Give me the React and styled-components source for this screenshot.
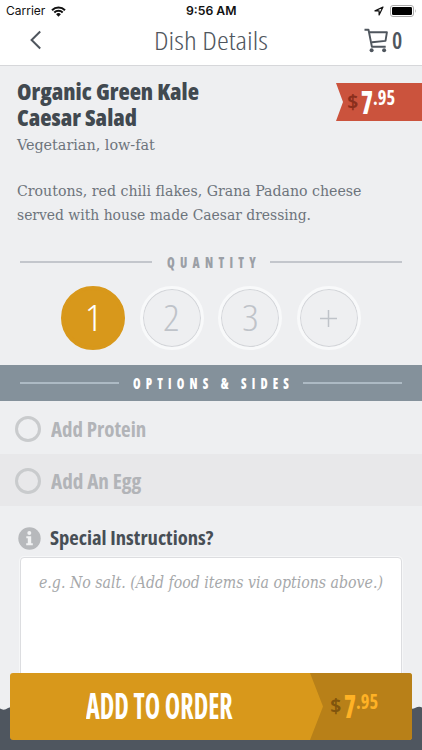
import React, { useLayoutEffect, useRef, useState } from 'react'
import styled, { createGlobalStyle } from 'styled-components';

// Squeezes a line of text horizontally so that it fills the given width.
const Fit = ({ width, spacing = 0, children }) => {
  const ref = useRef(null);
  const [scale, setScale] = useState(1);

  useLayoutEffect(() => {
    const natural = ref.current.offsetWidth - spacing;
    setScale(width / natural);
  }, [width, spacing, children]);

  return (
    <FitBox $width={width}>
      <FitText ref={ref} $spacing={spacing} style={{ transform: `scaleX(${scale})` }}>
        {children}
      </FitText>
    </FitBox>
  )
}

const quantities = [
  { label: '1', width: 17, active: true },
  { label: '2', width: 17 },
  { label: '3', width: 17 },
];

const options = [
  { label: 'Add Protein', width: 95 },
  { label: 'Add An Egg', width: 90 },
];

const StatusBar = () => (
  <Status>
    <Carrier>
      <Fit width={39}>Carrier</Fit>
      <svg width="15" height="11" viewBox="0 0 15 11">
        <path d="M1 4.2a9.2 9.2 0 0 1 13 0M3.3 6.5a6 6 0 0 1 8.4 0" fill="none" stroke="#111" strokeWidth="2" />
        <path d="M5.1 8.2a3.4 3.4 0 0 1 4.8 0L7.5 10.7z" fill="#111" />
      </svg>
    </Carrier>
    <Time><Fit width={51}>9:56 AM</Fit></Time>
    <Indicators>
      <svg width="10" height="10" viewBox="0 0 10 10">
        <path d="M9 1L1 4.9h4.1V9z" fill="none" stroke="#111" strokeWidth="1.2" strokeLinejoin="round" />
      </svg>
      <svg width="27" height="12" viewBox="0 0 27 12">
        <rect x=".5" y=".5" width="23" height="11" rx="2.5" fill="none" stroke="#aaa" />
        <rect x="2" y="2" width="20" height="8" rx="1.2" fill="#000" />
        <path d="M25 4q1.6 2 0 4z" fill="#aaa" />
      </svg>
    </Indicators>
  </Status>
)

const App = () => {
  return (
    <Screen>
      <GlobalStyle />
      <StatusBar />
      <Header>
        <Back>
          <svg width="12" height="20" viewBox="0 0 12 20">
            <path d="M10.2 1.5L1.6 10l8.6 8.5" fill="none" stroke="#4f565e" strokeWidth="2" />
          </svg>
        </Back>
        <Title><Fit width={114}>Dish Details</Fit></Title>
        <Cart>
          <svg width="25" height="25" viewBox="0 0 25 25">
            <path d="M.5 1.7h4l3.4 17.1h13.8M5.1 4.3h17.8l-1.4 8.6L8 14.3" fill="none" stroke="#4f565e" strokeWidth="1.9" strokeLinejoin="round" />
            <circle cx="7.6" cy="22.3" r="2" fill="#4f565e" />
            <circle cx="20.1" cy="22.3" r="2" fill="#4f565e" />
          </svg>
          <Fit width={10}>0</Fit>
        </Cart>
      </Header>

      <Dish>
        <div>
          <DishName>
            <Fit width={182}>Organic Green Kale</Fit>
            <Fit width={120}>Caesar Salad</Fit>
          </DishName>
          <Diet><Fit width={138}>Vegetarian, low-fat</Fit></Diet>
          <Description>
            <Fit width={344}>Croutons, red chili flakes, Grana Padano cheese</Fit>
            <Fit width={294}>served with house made Caesar dressing.</Fit>
          </Description>
        </div>
        <Ribbon>
          <Dollar><Fit width={11}>$</Fit></Dollar>
          <Whole><Fit width={12}>7</Fit></Whole>
          <Cents><Fit width={22}>.95</Fit></Cents>
        </Ribbon>
      </Dish>

      <Divider>
        <Rule />
        <Fit width={89} spacing={7}>QUANTITY</Fit>
        <Rule />
      </Divider>

      <Quantities>
        {quantities.map((q) => (
          <Quantity key={q.label} $active={q.active}>
            <Fit width={q.width}>{q.label}</Fit>
          </Quantity>
        ))}
        <Quantity>
          <svg width="17" height="17" viewBox="0 0 17 17">
            <path d="M8.5 0v17M0 8.5h17" stroke="#bfc3c9" strokeWidth="1.5" />
          </svg>
        </Quantity>
      </Quantities>

      <Divider $band>
        <Rule $band />
        <Fit width={156} spacing={7}>OPTIONS &amp; SIDES</Fit>
        <Rule $band />
      </Divider>

      {options.map((o, i) => (
        <Option key={o.label} $shaded={i % 2 === 1}>
          <Radio />
          <Fit width={o.width}>{o.label}</Fit>
        </Option>
      ))}

      <Instructions>
        <InstructionsTitle>
          <svg width="23" height="23" viewBox="0 0 23 23">
            <circle cx="11.5" cy="11.5" r="11.2" fill="#b7b9bc" />
            <circle cx="11.3" cy="5.9" r="2" fill="#f1f2f3" />
            <path d="M8.3 9.3h4.9v6.9h1.6v2H8.2v-2h1.6v-4.9H8.3z" fill="#f1f2f3" />
          </svg>
          <Fit width={163}>Special Instructions?</Fit>
        </InstructionsTitle>
        <Notes>
          <Fit width={344}>e.g. No salt. (Add food items via options above.)</Fit>
        </Notes>
      </Instructions>

      <Footer>
        <Wave width="422" height="44" viewBox="0 0 422 44">
          <path d="M0 2.5Q4 5 8 2L14 0H408Q411 4 415 2Q419 0 422 1.5V44H0z" fill="#4f565f" />
        </Wave>
        <OrderButton>
          <OrderLabel><Fit width={147}>ADD TO ORDER</Fit></OrderLabel>
          <OrderPrice>
            <Dollar $order><Fit width={11}>$</Fit></Dollar>
            <Whole $order><Fit width={12}>7</Fit></Whole>
            <Cents $order><Fit width={22}>.95</Fit></Cents>
          </OrderPrice>
        </OrderButton>
      </Footer>
    </Screen>
  )
}

export default App

const GlobalStyle = createGlobalStyle`
  * {
    box-sizing: border-box;
  }
  body {
    margin: 0;
    background-color: #eeeff1;
  }
  svg {
    display: block;
    flex: none;
  }
`;

const FitBox = styled.span`
  display: block;
  flex: none;
  width: ${(props) => props.$width}px;
`;

const FitText = styled.span`
  display: inline-block;
  vertical-align: top;
  white-space: nowrap;
  letter-spacing: ${(props) => props.$spacing}px;
  transform-origin: left;
`;

const Screen = styled.div`
  position: relative;
  width: 422px;
  height: 750px;
  overflow: hidden;
  background-color: #eeeff1;
  color: #4f565e;
  font-family: 'Open Sans', sans-serif;
  font-stretch: 75%;
`;

const Status = styled.div`
  display: grid;
  grid-template-columns: 1fr 51px 1fr;
  align-items: center;
  height: 22px;
  padding: 0 5px 0 6px;
  background-color: white;
  color: #111;
  font-family: Inter, sans-serif;
  font-stretch: 100%;
  font-size: 12px;
  line-height: 22px;
`;

const Carrier = styled.div`
  display: flex;
  align-items: center;
  gap: 6px;
`;

const Time = styled.div`
  font-weight: 600;
`;

const Indicators = styled.div`
  display: flex;
  align-items: center;
  justify-content: flex-end;
  gap: 6px;
`;

const Header = styled.div`
  display: grid;
  grid-template-columns: 1fr 114px 1fr;
  align-items: center;
  height: 44px;
  padding: 0 20px 8px;
  background-color: white;
  border-bottom: 1px solid #d6d7da;
`;

const Back = styled.div`
  padding-left: 10px;
`;

const Title = styled.div`
  font-size: 26.5px;
  font-weight: 350;
  line-height: 36px;
`;

const Cart = styled.div`
  display: flex;
  align-items: center;
  justify-content: flex-end;
  gap: 3px;
  font-size: 23px;
  font-weight: 600;
  line-height: 36px;
`;

const Dish = styled.div`
  display: flex;
  justify-content: space-between;
  height: 178px;
  padding: 13px 0 0 16.5px;
`;

const DishName = styled.div`
  color: #414950;
  font-size: 22.5px;
  font-weight: 800;
  line-height: 25.5px;
`;

const Diet = styled.div`
  margin-top: 3px;
  color: #6d747c;
  font-family: 'DejaVu Serif', serif;
  font-size: 15.5px;
  line-height: 24px;
`;

const Description = styled.div`
  margin-top: 23px;
  color: #6d747c;
  font-family: 'DejaVu Serif', serif;
  font-size: 15.5px;
  line-height: 23.6px;
`;

const Ribbon = styled.div`
  display: flex;
  flex: none;
  width: 86px;
  height: 38px;
  margin: 4px 0 0 -100px;
  padding-left: 11px;
  background-color: #cb533d;
  clip-path: polygon(0 0, 100% 0, 100% 100%, 0 100%, 7px 50%);
`;

const Dollar = styled.div`
  color: ${(props) => (props.$order ? '#80540d' : '#8a2e1c')};
  font-size: 20px;
  font-weight: 700;
  line-height: 38px;
`;

const Whole = styled.div`
  margin-left: 3px;
  color: ${(props) => (props.$order ? '#ffb225' : 'white')};
  font-size: 32px;
  font-weight: 800;
  line-height: 37px;
`;

const Cents = styled.div`
  color: ${(props) => (props.$order ? '#ffb225' : 'white')};
  font-size: 21px;
  font-weight: 700;
  line-height: 29px;
`;

const Divider = styled.div`
  display: flex;
  align-items: center;
  gap: ${(props) => (props.$band ? 14 : 14.5)}px;
  height: 36px;
  padding: 0 20px;
  font-size: 16.5px;
  font-weight: 800;
  line-height: 36px;
  color: ${(props) => (props.$band ? 'white' : '#9b9fa6')};
  background-color: ${(props) => (props.$band ? '#84919b' : 'transparent')};
`;

const Rule = styled.div`
  flex: 1;
  height: 1.5px;
  background-color: ${(props) => (props.$band ? '#adbac4' : '#c3c6cc')};
`;

const Quantities = styled.div`
  display: flex;
  justify-content: center;
  gap: 14.4px;
  height: 85px;
  padding-top: 6px;
`;

const Quantity = styled.div`
  display: flex;
  align-items: center;
  justify-content: center;
  width: 64px;
  height: 64px;
  border: 3px solid ${(props) => (props.$active ? '#d8981b' : '#f8f9fa')};
  border-radius: 50%;
  box-shadow: inset 0 0 0 1px ${(props) => (props.$active ? '#d8981b' : '#d3d5d9')};
  background-color: ${(props) => (props.$active ? '#d8981b' : 'transparent')};
  color: ${(props) => (props.$active ? 'white' : '#bfc3c9')};
  font-size: 36px;
  font-weight: ${(props) => (props.$active ? 350 : 300)};
  line-height: 56px;
`;

const Option = styled.div`
  display: flex;
  align-items: center;
  gap: 10px;
  height: 52.5px;
  padding: 3px 15px 0;
  background-color: ${(props) => (props.$shaded ? '#e8e8ea' : 'transparent')};
  color: #b2b4b8;
  font-size: 20.5px;
  font-weight: 700;
  line-height: 40px;
`;

const Radio = styled.div`
  width: 26px;
  height: 26px;
  border: 3px solid #c9cbcd;
  border-radius: 50%;
`;

const Instructions = styled.div`
  padding: 12px 20px 0;
`;

const InstructionsTitle = styled.div`
  display: flex;
  align-items: center;
  gap: 9px;
  height: 40px;
  margin-left: -2px;
  color: #474e55;
  font-size: 20px;
  font-weight: 700;
  line-height: 40px;
`;

const Notes = styled.div`
  height: 160px;
  margin-top: -1px;
  padding: 12px 18px;
  border: 1px solid #dcdde0;
  border-radius: 4px;
  box-shadow: 0 0 0 1px #f6f7f8;
  background-color: white;
  color: #a6a8aa;
  font-family: 'DejaVu Serif', serif;
  font-size: 16.5px;
  font-style: italic;
  line-height: 25px;
`;

const Footer = styled.div`
  position: absolute;
  left: 0;
  right: 0;
  bottom: 0;
  padding: 0 10px 10px;
`;

const Wave = styled.svg`
  position: absolute;
  left: 0;
  bottom: 0;
`;

const OrderButton = styled.div`
  position: relative;
  display: flex;
  height: 67px;
  border-radius: 3px;
  overflow: hidden;
  background-color: #d8981b;
`;

const OrderLabel = styled.div`
  flex: 1;
  padding-left: 76px;
  color: white;
  font-size: 36px;
  font-weight: 700;
  line-height: 66px;
`;

const OrderPrice = styled.div`
  display: flex;
  width: 102px;
  padding: 14px 0 0 20px;
  background-color: #b88018;
  clip-path: polygon(0 0, 100% 0, 100% 100%, 0 100%, 13px 50%);
`;
